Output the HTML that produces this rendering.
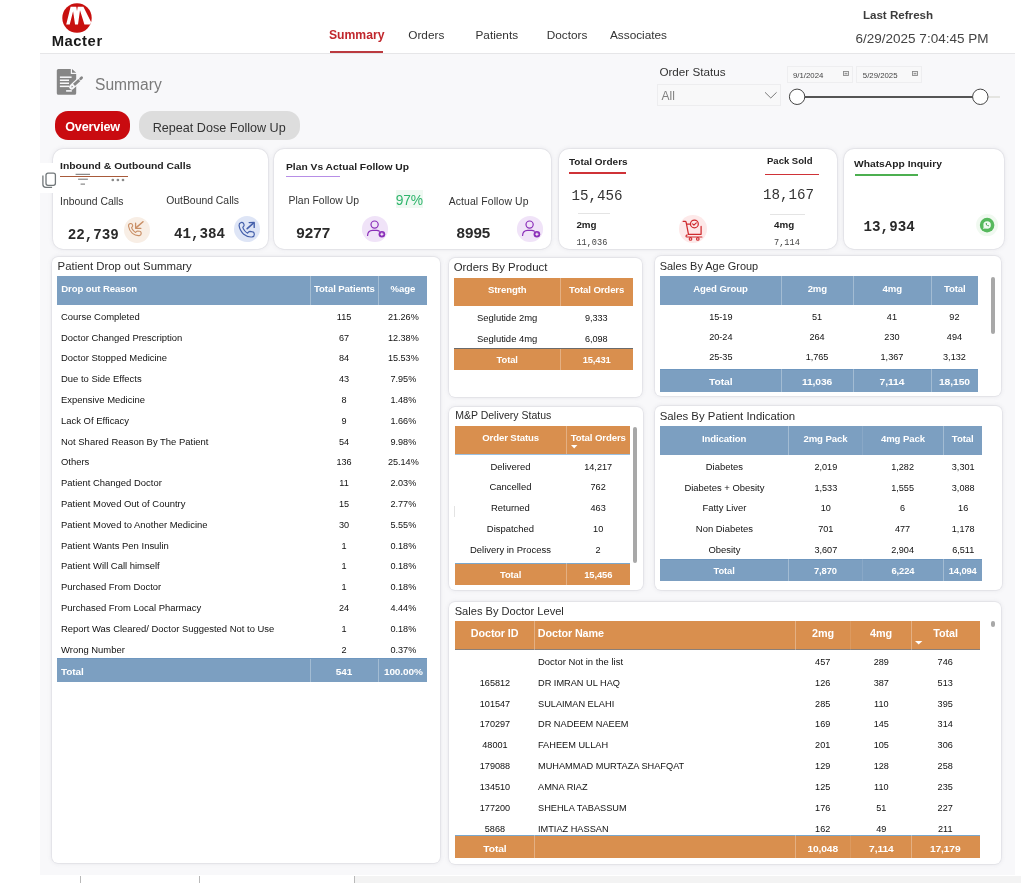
<!DOCTYPE html>
<html><head><meta charset="utf-8"><title>Summary</title>
<style>
html,body{margin:0;padding:0;}
html{width:1021px;height:883px;overflow:hidden;}
body{width:1021px;height:883px;position:relative;overflow:hidden;background:#fff;font-family:"Liberation Sans",sans-serif;}
.b{position:absolute;box-sizing:border-box;}
.t{position:absolute;white-space:nowrap;font-family:"Liberation Sans",sans-serif;}
.m{font-family:"Liberation Mono",monospace;}
.card{position:absolute;background:#fff;box-sizing:border-box;box-shadow:0 0 0 0.7px rgba(60,60,80,0.07),0 0 5px rgba(90,90,115,0.14);}
svg{position:absolute;overflow:visible;}
#L{position:absolute;left:0;top:0;width:1021px;height:883px;will-change:transform;overflow:hidden;}
</style></head><body><div id="L">

<div class="b" style="left:40.00px;top:53.00px;width:975.00px;height:821.50px;background:#f8f8fa;border-top:1px solid #e6e6e8;"></div>
<div class="b" style="left:354.50px;top:876.00px;width:667.00px;height:7.00px;background:#f3f3f3;"></div>
<div class="b" style="left:80.00px;top:876.00px;width:1.00px;height:7.00px;background:#b9b9b9;"></div>
<div class="b" style="left:199.00px;top:876.00px;width:1.00px;height:7.00px;background:#b9b9b9;"></div>
<div class="b" style="left:354.00px;top:876.00px;width:1.00px;height:7.00px;background:#b9b9b9;"></div>
<svg style="left:62px;top:2.5px" width="30" height="30" viewBox="0 0 30 30">
<defs><clipPath id="lc"><circle cx="15" cy="15" r="14.7"/></clipPath></defs>
<circle cx="15" cy="15" r="14.7" fill="#c8100f"/>
<path clip-path="url(#lc)" d="M4.2 21.6 L8.6 3.8 L14.3 3.8 L15.0 8.0 L15.7 3.8 L21.4 3.8 L29.8 20.4 L28 21.6 L22.4 21.6 L18 7.3 L16 21.6 L13.05 21.6 L11.1 8.3 L7.7 21.6 Z" fill="#fff"/>
</svg>
<div class="t" style="left:37.20px;top:33px;width:80.00px;font-size:14.8px;line-height:16px;color:#1a1a1a;text-align:center;font-weight:bold;letter-spacing:0.55px;">Macter</div>
<div class="t" style="left:306.70px;top:28px;width:100.00px;font-size:12.2px;line-height:14px;color:#c0272d;text-align:center;font-weight:bold;">Summary</div>
<div class="b" style="left:329.80px;top:50.90px;width:53.20px;height:1.90px;background:#bb3a3f;"></div>
<div class="t" style="left:376.30px;top:28px;width:100.00px;font-size:11.8px;line-height:14px;color:#333;text-align:center;">Orders</div>
<div class="t" style="left:446.80px;top:28px;width:100.00px;font-size:11.8px;line-height:14px;color:#333;text-align:center;">Patients</div>
<div class="t" style="left:517.00px;top:28px;width:100.00px;font-size:11.8px;line-height:14px;color:#333;text-align:center;">Doctors</div>
<div class="t" style="left:588.50px;top:28px;width:100.00px;font-size:11.8px;line-height:14px;color:#333;text-align:center;">Associates</div>
<div class="t" style="left:828.00px;top:8px;width:140.00px;font-size:11.6px;line-height:13px;color:#3c3c3c;text-align:center;font-weight:bold;">Last Refresh</div>
<div class="t" style="left:822.00px;top:31px;width:200.00px;font-size:13.5px;line-height:15px;color:#444;text-align:center;">6/29/2025 7:04:45 PM</div>
<svg style="left:56px;top:68px" width="28" height="28" viewBox="0 0 28 28">
<path d="M0.8 2.6 Q0.8 1.05 2.4 1.05 L14.8 1.05 L14.8 5.9 L20.2 5.9 L20.2 25.2 Q20.2 26.8 18.6 26.8 L2.4 26.8 Q0.8 26.8 0.8 25.2 Z" fill="#868686"/>
<path d="M16.0 1.1 L20.2 4.8 L16.0 4.8 Z" fill="#868686"/>
<rect x="3.9" y="8.45" width="11.7" height="1.5" fill="#f8f8fa"/>
<rect x="3.9" y="11.5" width="9.1" height="1.5" fill="#f8f8fa"/>
<rect x="3.9" y="14.5" width="9.1" height="1.5" fill="#f8f8fa"/>
<rect x="3.9" y="17.6" width="9.1" height="1.5" fill="#f8f8fa"/>
<rect x="10.1" y="22.1" width="5.7" height="1.6" fill="#f8f8fa"/>
<path d="M15.8 18.9 L25.5 10.0" stroke="#f8f8fa" stroke-width="5.2" stroke-linecap="round" fill="none"/>
<path d="M18.0 16.9 L23.3 12.1" stroke="#868686" stroke-width="2.8" fill="none"/>
<path d="M24.6 10.7 L25.6 9.8" stroke="#868686" stroke-width="2.8" stroke-linecap="round" fill="none"/>
<path d="M15.2 19.5 L15.9 17.6 L17.2 19.0 Z" fill="#868686"/>
</svg>
<div class="t" style="left:95.00px;top:76px;width:400.00px;font-size:15.6px;line-height:17px;color:#7a7a7a;text-align:left;">Summary</div>
<div class="t" style="left:659.40px;top:65px;width:400.00px;font-size:11.7px;line-height:13px;color:#333;text-align:left;">Order Status</div>
<div class="b" style="left:657.00px;top:84.00px;width:124.00px;height:21.50px;background:#f8f8f9;border:1px solid #ededef;"></div>
<div class="t" style="left:661.50px;top:89px;width:400.00px;font-size:12.0px;line-height:14px;color:#808080;text-align:left;">All</div>
<svg style="left:764px;top:91px" width="14" height="9" viewBox="0 0 14 9"><path d="M1 1.3 L6.8 7 L12.6 1.3" fill="none" stroke="#7a7a7a" stroke-width="1"/></svg>
<div class="b" style="left:786.70px;top:66.20px;width:66.00px;height:17.00px;background:#f8f8f9;border:1px solid #eeeef0;"></div>
<div class="b" style="left:856.40px;top:66.20px;width:65.50px;height:17.00px;background:#f8f8f9;border:1px solid #eeeef0;"></div>
<div class="t" style="left:793.00px;top:71px;width:400.00px;font-size:7.8px;line-height:9px;color:#444;text-align:left;">9/1/2024</div>
<div class="t" style="left:862.80px;top:71px;width:400.00px;font-size:7.8px;line-height:9px;color:#444;text-align:left;">5/29/2025</div>
<svg style="left:843px;top:71.3px" width="6" height="5" viewBox="0 0 6 5"><rect x="0.5" y="0.5" width="5" height="4" fill="#f0f0f0" stroke="#8c8c8c" stroke-width="0.9"/><rect x="1.6" y="1.9" width="2.8" height="1.4" fill="#9a9a9a"/></svg>
<svg style="left:912px;top:71.3px" width="6" height="5" viewBox="0 0 6 5"><rect x="0.5" y="0.5" width="5" height="4" fill="#f0f0f0" stroke="#8c8c8c" stroke-width="0.9"/><rect x="1.6" y="1.9" width="2.8" height="1.4" fill="#9a9a9a"/></svg>
<div class="b" style="left:797.00px;top:96.10px;width:183.00px;height:2.00px;background:#555;"></div>
<div class="b" style="left:988.00px;top:96.10px;width:12.00px;height:2.00px;background:#e5e5e1;"></div>
<svg style="left:788px;top:88.4px" width="18" height="18" viewBox="0 0 18 18"><circle cx="9.1" cy="8.8" r="7.7" fill="#fff" stroke="#444" stroke-width="1"/></svg>
<svg style="left:971.2px;top:88.4px" width="18" height="18" viewBox="0 0 18 18"><circle cx="9.3" cy="8.8" r="7.7" fill="#fff" stroke="#444" stroke-width="1"/></svg>
<div class="b" style="left:55.00px;top:111.20px;width:75.30px;height:28.80px;background:#c90b10;border-radius:13px;"></div>
<div class="t" style="left:52.60px;top:120px;width:80.00px;font-size:12.6px;line-height:14px;color:#fff;text-align:center;font-weight:bold;letter-spacing:-0.15px;">Overview</div>
<div class="b" style="left:138.80px;top:111.20px;width:160.80px;height:28.80px;background:#dddddd;border-radius:13px;"></div>
<div class="t" style="left:139.20px;top:121px;width:160.00px;font-size:12.6px;line-height:14px;color:#333;text-align:center;">Repeat Dose Follow Up</div>
<div class="card" style="left:52.80px;top:148.80px;width:215.20px;height:100.70px;border-radius:10px;"></div>
<div class="card" style="left:273.80px;top:148.80px;width:277.70px;height:100.70px;border-radius:10px;"></div>
<div class="card" style="left:559.40px;top:148.80px;width:277.20px;height:100.70px;border-radius:10px;"></div>
<div class="card" style="left:844.00px;top:149.30px;width:160.00px;height:99.70px;border-radius:10px;"></div>
<div class="t" style="left:60.00px;top:160px;width:400.00px;font-size:9.4px;line-height:11px;color:#222;text-align:left;font-weight:bold;transform:scaleX(1.106);transform-origin:left center;">Inbound &amp; Outbound Calls</div>
<div class="b" style="left:60.00px;top:175.50px;width:67.50px;height:1.10px;background:#a85a3a;"></div>
<div class="b" style="left:40.00px;top:163.30px;width:13.20px;height:29.40px;background:#ffffff;"></div>
<svg style="left:41.5px;top:171.5px" width="14" height="17" viewBox="0 0 14 17">
<rect x="4.0" y="1.1" width="9.4" height="12.2" rx="2" fill="#fff" stroke="#71777a" stroke-width="1.3"/>
<path d="M0.9 3.6 L0.9 12.5 Q0.9 15.3 3.8 15.3 L10.1 15.3" fill="none" stroke="#71777a" stroke-width="1.3"/>
</svg>
<svg style="left:75px;top:173px" width="16" height="13" viewBox="0 0 16 13">
<path d="M0.6 1.3 H15.0 M3.1 6.2 H12.9 M5.6 11.1 H10.0" stroke="#6f6f6f" stroke-width="1.0" fill="none"/></svg>
<svg style="left:111px;top:178px" width="14" height="4" viewBox="0 0 14 4">
<circle cx="1.8" cy="2" r="1.35" fill="#8a8a8a"/><circle cx="6.9" cy="2" r="1.35" fill="#8a8a8a"/><circle cx="12" cy="2" r="1.35" fill="#8a8a8a"/></svg>
<div class="t" style="left:60.00px;top:196px;width:400.00px;font-size:10.4px;line-height:11px;color:#333;text-align:left;">Inbound Calls</div>
<div class="t" style="left:166.20px;top:195px;width:400.00px;font-size:10.4px;line-height:11px;color:#333;text-align:left;">OutBound Calls</div>
<div class="t m" style="left:67.70px;top:227px;width:400.00px;font-size:14.2px;line-height:16px;color:#2a2a2a;text-align:left;font-weight:bold;">22,739</div>
<div class="t m" style="left:174.00px;top:226px;width:400.00px;font-size:14.2px;line-height:16px;color:#2a2a2a;text-align:left;font-weight:bold;">41,384</div>
<svg style="left:124.40px;top:216.60px" width="26" height="26" viewBox="0 0 26 26">
<circle cx="13" cy="13" r="13" fill="#f8eee5"/>
<path transform="translate(4.1,6.3)" d="M1.9 0.3 Q0.3 0.7 0.4 2.7 Q0.9 6.9 4.3 10.1 Q7.5 12.7 11.3 12.3 Q13.1 12.0 13.1 10.3 L12.9 9.1 Q12.7 8.1 11.7 8.0 L9.5 7.7 Q8.7 7.7 8.2 8.3 L7.5 9.1 Q5.9 8.3 4.9 6.9 Q3.9 5.7 3.5 4.3 L4.3 3.3 Q4.8 2.7 4.5 1.9 L3.9 0.7 Q3.3 -0.1 1.9 0.3 Z" fill="none" stroke="#c98f66" stroke-width="1.15" stroke-linejoin="round"/>
<path d="M19.0 4.7 L12.2 10.6" fill="none" stroke="#c98f66" stroke-width="1.5" stroke-linecap="round"/><path d="M11.6 6.2 L11.6 11.3 L16.9 11.3" fill="none" stroke="#c98f66" stroke-width="1.3" stroke-linecap="round" stroke-linejoin="round"/>
</svg>
<svg style="left:234.40px;top:216.00px" width="26" height="26" viewBox="0 0 26 26">
<circle cx="13" cy="13" r="13" fill="#dee5f6"/>
<path transform="translate(4.6,6.2) scale(1.2)" d="M1.9 0.3 Q0.3 0.7 0.4 2.7 Q0.9 6.9 4.3 10.1 Q7.5 12.7 11.3 12.3 Q13.1 12.0 13.1 10.3 L12.9 9.1 Q12.7 8.1 11.7 8.0 L9.5 7.7 Q8.7 7.7 8.2 8.3 L7.5 9.1 Q5.9 8.3 4.9 6.9 Q3.9 5.7 3.5 4.3 L4.3 3.3 Q4.8 2.7 4.5 1.9 L3.9 0.7 Q3.3 -0.1 1.9 0.3 Z" fill="none" stroke="#4560ab" stroke-width="1.0" stroke-linejoin="round"/>
<path d="M13.2 12.6 L19.4 7.2" fill="none" stroke="#4560ab" stroke-width="1.6" stroke-linecap="round"/><path d="M15.2 6.6 L20.2 6.5 L20.2 11.4" fill="none" stroke="#4560ab" stroke-width="1.4" stroke-linecap="round" stroke-linejoin="round"/>
</svg>
<div class="t" style="left:286.00px;top:161px;width:400.00px;font-size:9.4px;line-height:11px;color:#222;text-align:left;font-weight:bold;transform:scaleX(1.096);transform-origin:left center;">Plan Vs Actual Follow Up</div>
<div class="b" style="left:286.00px;top:175.50px;width:54.00px;height:1.90px;background:#b78ee6;"></div>
<div class="t" style="left:288.50px;top:195px;width:400.00px;font-size:10.4px;line-height:11px;color:#333;text-align:left;letter-spacing:0.05px;">Plan Follow Up</div>
<div class="b" style="left:396.00px;top:190.20px;width:27.30px;height:17.50px;background:#eff9f2;"></div>
<div class="t" style="left:389.30px;top:193px;width:40.00px;font-size:13.8px;line-height:15px;color:#2fb56c;text-align:center;letter-spacing:-0.2px;">97%</div>
<div class="t" style="left:448.70px;top:196px;width:400.00px;font-size:10.4px;line-height:11px;color:#333;text-align:left;letter-spacing:0.12px;">Actual Follow Up</div>
<div class="t" style="left:296.30px;top:224px;width:400.00px;font-size:15.2px;line-height:17px;color:#2a2a2a;text-align:left;font-weight:bold;">9277</div>
<div class="t" style="left:456.50px;top:224px;width:400.00px;font-size:15.2px;line-height:17px;color:#2a2a2a;text-align:left;font-weight:bold;">8995</div>
<svg style="left:362.20px;top:216.10px" width="26" height="26" viewBox="0 0 26 26">
<circle cx="13" cy="13" r="13.1" fill="#f0e3f8"/>
<circle cx="12.6" cy="8.6" r="3.6" fill="none" stroke="#8b2fb9" stroke-width="1.2"/>
<path d="M5.6 19.4 Q5.8 14.6 10.6 14.4 L14.6 14.4 Q16.4 14.4 17.4 15.2" fill="none" stroke="#8b2fb9" stroke-width="1.2" stroke-linecap="round"/>
<circle cx="19.9" cy="18.2" r="3.3" fill="#8b2fb9"/>
<path d="M19.9 16.6 V19.8 M18.3 18.2 H21.5" stroke="#fff" stroke-width="1"/>
</svg>
<svg style="left:517.40px;top:216.10px" width="26" height="26" viewBox="0 0 26 26">
<circle cx="13" cy="13" r="13.1" fill="#f0e3f8"/>
<circle cx="12.6" cy="8.6" r="3.6" fill="none" stroke="#8b2fb9" stroke-width="1.2"/>
<path d="M5.6 19.4 Q5.8 14.6 10.6 14.4 L14.6 14.4 Q16.4 14.4 17.4 15.2" fill="none" stroke="#8b2fb9" stroke-width="1.2" stroke-linecap="round"/>
<circle cx="19.9" cy="18.2" r="3.3" fill="#8b2fb9"/>
<path d="M19.9 16.6 V19.8 M18.3 18.2 H21.5" stroke="#fff" stroke-width="1"/>
</svg>
<div class="t" style="left:569.00px;top:156px;width:400.00px;font-size:9.4px;line-height:11px;color:#222;text-align:left;font-weight:bold;transform:scaleX(1.064);transform-origin:left center;">Total Orders</div>
<div class="b" style="left:569.00px;top:172.40px;width:56.50px;height:1.40px;background:#cf3237;"></div>
<div class="t" style="left:767.20px;top:155px;width:400.00px;font-size:9.4px;line-height:11px;color:#222;text-align:left;font-weight:bold;transform:scaleX(1.015);transform-origin:left center;">Pack Sold</div>
<div class="b" style="left:765.00px;top:173.80px;width:54.00px;height:1.40px;background:#cf3237;"></div>
<div class="t m" style="left:571.50px;top:188px;width:400.00px;font-size:14.2px;line-height:16px;color:#333;text-align:left;">15,456</div>
<div class="t m" style="left:763.00px;top:187px;width:400.00px;font-size:14.2px;line-height:16px;color:#333;text-align:left;">18,167</div>
<div class="b" style="left:578.00px;top:212.80px;width:32.00px;height:1.00px;background:#e4e4e4;"></div>
<div class="b" style="left:770.40px;top:214.00px;width:34.50px;height:1.00px;background:#e4e4e4;"></div>
<div class="t" style="left:576.40px;top:219px;width:400.00px;font-size:9.8px;line-height:11px;color:#222;text-align:left;font-weight:bold;">2mg</div>
<div class="t" style="left:774.00px;top:219px;width:400.00px;font-size:9.8px;line-height:11px;color:#222;text-align:left;font-weight:bold;">4mg</div>
<div class="t m" style="left:576.40px;top:238px;width:400.00px;font-size:8.6px;line-height:10px;color:#444;text-align:left;">11,036</div>
<div class="t m" style="left:774.00px;top:238px;width:400.00px;font-size:8.6px;line-height:10px;color:#444;text-align:left;">7,114</div>
<svg style="left:679px;top:215.3px" width="28" height="28" viewBox="0 0 28 28">
<circle cx="14" cy="14" r="14" fill="#fde9e9"/>
<path d="M4.2 6.4 L6.2 6.4 Q6.9 6.4 7.1 7.2 L9.5 19.3 L22.1 19.3 L22.1 11.4" fill="none" stroke="#cf2a2e" stroke-width="1.25" stroke-linecap="round" stroke-linejoin="round"/>
<path d="M7.8 9.2 L11.4 9.2" fill="none" stroke="#cf2a2e" stroke-width="1.2" stroke-linecap="round"/>
<path d="M8.2 19.9 Q7.0 20.2 7.0 21.2 Q7.0 22.0 8.0 22.0 L22.9 22.0" fill="none" stroke="#cf2a2e" stroke-width="1.2" stroke-linecap="round" stroke-linejoin="round"/>
<circle cx="15.4" cy="8.9" r="3.9" fill="#fde9e9" stroke="#cf2a2e" stroke-width="1.25"/>
<path d="M13.6 8.9 L14.9 10.2 L17.3 7.8" fill="none" stroke="#cf2a2e" stroke-width="1.2" stroke-linecap="round" stroke-linejoin="round"/>
<circle cx="11.5" cy="23.9" r="1.3" fill="none" stroke="#cf2a2e" stroke-width="1.1"/>
<circle cx="18.8" cy="23.9" r="1.3" fill="none" stroke="#cf2a2e" stroke-width="1.1"/>
</svg>
<div class="t" style="left:853.80px;top:158px;width:400.00px;font-size:9.4px;line-height:11px;color:#222;text-align:left;font-weight:bold;transform:scaleX(1.096);transform-origin:left center;">WhatsApp Inquiry</div>
<div class="b" style="left:855.00px;top:173.70px;width:63.00px;height:2.00px;background:#4caf50;"></div>
<div class="t m" style="left:863.60px;top:219px;width:400.00px;font-size:14.2px;line-height:16px;color:#2a2a2a;text-align:left;font-weight:bold;">13,934</div>
<svg style="left:975.6px;top:214px" width="22" height="22" viewBox="0 0 22 22">
<circle cx="11.1" cy="11.1" r="11" fill="#f0f9f0"/>
<circle cx="11.1" cy="11.1" r="7.3" fill="#57b95d"/>
<circle cx="11.1" cy="10.9" r="3.75" fill="#f1faf1"/>
<path d="M7.0 15.0 L7.9 12.4 L9.8 14.3 Z" fill="#f1faf1"/>
<path d="M9.7 9.0 Q9.6 10.5 10.8 11.6 Q11.8 12.5 13.0 12.3 L13.0 11.6 L12.1 11.2 L11.7 11.6 Q11.0 11.2 10.7 10.6 L11.0 10.1 L10.5 9.0 Z" fill="#3e9b48"/>
</svg>
<div class="card" style="left:52.00px;top:256.50px;width:388.00px;height:606.50px;border-radius:6px;"></div>
<div class="t" style="left:57.60px;top:260px;width:400.00px;font-size:11.4px;line-height:12px;color:#2b2b2b;text-align:left;">Patient Drop out Summary</div>
<div class="b" style="left:57.20px;top:275.90px;width:370.00px;height:28.80px;background:#7c9fc1;"></div>
<div class="b" style="left:309.90px;top:275.90px;width:1.00px;height:28.80px;background:rgba(255,255,255,0.3);"></div>
<div class="b" style="left:378.00px;top:275.90px;width:1.00px;height:28.80px;background:rgba(255,255,255,0.3);"></div>
<div class="t" style="left:61.20px;top:283px;width:400.00px;font-size:9.6px;line-height:11px;color:#fff;text-align:left;font-weight:bold;letter-spacing:-0.1px;">Drop out Reason</div>
<div class="t" style="left:300.40px;top:283px;width:88.10px;font-size:9.6px;line-height:11px;color:#fff;text-align:center;font-weight:bold;letter-spacing:-0.1px;">Total Patients</div>
<div class="t" style="left:368.50px;top:283px;width:68.70px;font-size:9.6px;line-height:11px;color:#fff;text-align:center;font-weight:bold;letter-spacing:-0.1px;">%age</div>
<div class="t" style="left:61.20px;top:311px;width:400.00px;font-size:9.7px;line-height:11px;color:#111;text-align:left;transform:scaleX(0.975);transform-origin:left center;">Course Completed</div>
<div class="t" style="left:300.40px;top:311px;width:88.10px;font-size:9.7px;line-height:11px;color:#111;text-align:center;transform:scaleX(0.94);transform-origin:center center;">115</div>
<div class="t" style="left:368.50px;top:311px;width:68.70px;font-size:9.7px;line-height:11px;color:#111;text-align:center;transform:scaleX(0.94);transform-origin:center center;">21.26%</div>
<div class="t" style="left:61.20px;top:332px;width:400.00px;font-size:9.7px;line-height:11px;color:#111;text-align:left;transform:scaleX(0.975);transform-origin:left center;">Doctor Changed Prescription</div>
<div class="t" style="left:300.40px;top:332px;width:88.10px;font-size:9.7px;line-height:11px;color:#111;text-align:center;transform:scaleX(0.94);transform-origin:center center;">67</div>
<div class="t" style="left:368.50px;top:332px;width:68.70px;font-size:9.7px;line-height:11px;color:#111;text-align:center;transform:scaleX(0.94);transform-origin:center center;">12.38%</div>
<div class="t" style="left:61.20px;top:352px;width:400.00px;font-size:9.7px;line-height:11px;color:#111;text-align:left;transform:scaleX(0.975);transform-origin:left center;">Doctor Stopped Medicine</div>
<div class="t" style="left:300.40px;top:352px;width:88.10px;font-size:9.7px;line-height:11px;color:#111;text-align:center;transform:scaleX(0.94);transform-origin:center center;">84</div>
<div class="t" style="left:368.50px;top:352px;width:68.70px;font-size:9.7px;line-height:11px;color:#111;text-align:center;transform:scaleX(0.94);transform-origin:center center;">15.53%</div>
<div class="t" style="left:61.20px;top:373px;width:400.00px;font-size:9.7px;line-height:11px;color:#111;text-align:left;transform:scaleX(0.975);transform-origin:left center;">Due to Side Effects</div>
<div class="t" style="left:300.40px;top:373px;width:88.10px;font-size:9.7px;line-height:11px;color:#111;text-align:center;transform:scaleX(0.94);transform-origin:center center;">43</div>
<div class="t" style="left:368.50px;top:373px;width:68.70px;font-size:9.7px;line-height:11px;color:#111;text-align:center;transform:scaleX(0.94);transform-origin:center center;">7.95%</div>
<div class="t" style="left:61.20px;top:394px;width:400.00px;font-size:9.7px;line-height:11px;color:#111;text-align:left;transform:scaleX(0.975);transform-origin:left center;">Expensive Medicine</div>
<div class="t" style="left:300.40px;top:394px;width:88.10px;font-size:9.7px;line-height:11px;color:#111;text-align:center;transform:scaleX(0.94);transform-origin:center center;">8</div>
<div class="t" style="left:368.50px;top:394px;width:68.70px;font-size:9.7px;line-height:11px;color:#111;text-align:center;transform:scaleX(0.94);transform-origin:center center;">1.48%</div>
<div class="t" style="left:61.20px;top:415px;width:400.00px;font-size:9.7px;line-height:11px;color:#111;text-align:left;transform:scaleX(0.975);transform-origin:left center;">Lack Of Efficacy</div>
<div class="t" style="left:300.40px;top:415px;width:88.10px;font-size:9.7px;line-height:11px;color:#111;text-align:center;transform:scaleX(0.94);transform-origin:center center;">9</div>
<div class="t" style="left:368.50px;top:415px;width:68.70px;font-size:9.7px;line-height:11px;color:#111;text-align:center;transform:scaleX(0.94);transform-origin:center center;">1.66%</div>
<div class="t" style="left:61.20px;top:436px;width:400.00px;font-size:9.7px;line-height:11px;color:#111;text-align:left;transform:scaleX(0.975);transform-origin:left center;">Not Shared Reason By The Patient</div>
<div class="t" style="left:300.40px;top:436px;width:88.10px;font-size:9.7px;line-height:11px;color:#111;text-align:center;transform:scaleX(0.94);transform-origin:center center;">54</div>
<div class="t" style="left:368.50px;top:436px;width:68.70px;font-size:9.7px;line-height:11px;color:#111;text-align:center;transform:scaleX(0.94);transform-origin:center center;">9.98%</div>
<div class="t" style="left:61.20px;top:456px;width:400.00px;font-size:9.7px;line-height:11px;color:#111;text-align:left;transform:scaleX(0.975);transform-origin:left center;">Others</div>
<div class="t" style="left:300.40px;top:456px;width:88.10px;font-size:9.7px;line-height:11px;color:#111;text-align:center;transform:scaleX(0.94);transform-origin:center center;">136</div>
<div class="t" style="left:368.50px;top:456px;width:68.70px;font-size:9.7px;line-height:11px;color:#111;text-align:center;transform:scaleX(0.94);transform-origin:center center;">25.14%</div>
<div class="t" style="left:61.20px;top:477px;width:400.00px;font-size:9.7px;line-height:11px;color:#111;text-align:left;transform:scaleX(0.975);transform-origin:left center;">Patient Changed Doctor</div>
<div class="t" style="left:300.40px;top:477px;width:88.10px;font-size:9.7px;line-height:11px;color:#111;text-align:center;transform:scaleX(0.94);transform-origin:center center;">11</div>
<div class="t" style="left:368.50px;top:477px;width:68.70px;font-size:9.7px;line-height:11px;color:#111;text-align:center;transform:scaleX(0.94);transform-origin:center center;">2.03%</div>
<div class="t" style="left:61.20px;top:498px;width:400.00px;font-size:9.7px;line-height:11px;color:#111;text-align:left;transform:scaleX(0.975);transform-origin:left center;">Patient Moved Out of Country</div>
<div class="t" style="left:300.40px;top:498px;width:88.10px;font-size:9.7px;line-height:11px;color:#111;text-align:center;transform:scaleX(0.94);transform-origin:center center;">15</div>
<div class="t" style="left:368.50px;top:498px;width:68.70px;font-size:9.7px;line-height:11px;color:#111;text-align:center;transform:scaleX(0.94);transform-origin:center center;">2.77%</div>
<div class="t" style="left:61.20px;top:519px;width:400.00px;font-size:9.7px;line-height:11px;color:#111;text-align:left;transform:scaleX(0.975);transform-origin:left center;">Patient Moved to Another Medicine</div>
<div class="t" style="left:300.40px;top:519px;width:88.10px;font-size:9.7px;line-height:11px;color:#111;text-align:center;transform:scaleX(0.94);transform-origin:center center;">30</div>
<div class="t" style="left:368.50px;top:519px;width:68.70px;font-size:9.7px;line-height:11px;color:#111;text-align:center;transform:scaleX(0.94);transform-origin:center center;">5.55%</div>
<div class="t" style="left:61.20px;top:540px;width:400.00px;font-size:9.7px;line-height:11px;color:#111;text-align:left;transform:scaleX(0.975);transform-origin:left center;">Patient Wants Pen Insulin</div>
<div class="t" style="left:300.40px;top:540px;width:88.10px;font-size:9.7px;line-height:11px;color:#111;text-align:center;transform:scaleX(0.94);transform-origin:center center;">1</div>
<div class="t" style="left:368.50px;top:540px;width:68.70px;font-size:9.7px;line-height:11px;color:#111;text-align:center;transform:scaleX(0.94);transform-origin:center center;">0.18%</div>
<div class="t" style="left:61.20px;top:560px;width:400.00px;font-size:9.7px;line-height:11px;color:#111;text-align:left;transform:scaleX(0.975);transform-origin:left center;">Patient Will Call himself</div>
<div class="t" style="left:300.40px;top:560px;width:88.10px;font-size:9.7px;line-height:11px;color:#111;text-align:center;transform:scaleX(0.94);transform-origin:center center;">1</div>
<div class="t" style="left:368.50px;top:560px;width:68.70px;font-size:9.7px;line-height:11px;color:#111;text-align:center;transform:scaleX(0.94);transform-origin:center center;">0.18%</div>
<div class="t" style="left:61.20px;top:581px;width:400.00px;font-size:9.7px;line-height:11px;color:#111;text-align:left;transform:scaleX(0.975);transform-origin:left center;">Purchased From Doctor</div>
<div class="t" style="left:300.40px;top:581px;width:88.10px;font-size:9.7px;line-height:11px;color:#111;text-align:center;transform:scaleX(0.94);transform-origin:center center;">1</div>
<div class="t" style="left:368.50px;top:581px;width:68.70px;font-size:9.7px;line-height:11px;color:#111;text-align:center;transform:scaleX(0.94);transform-origin:center center;">0.18%</div>
<div class="t" style="left:61.20px;top:602px;width:400.00px;font-size:9.7px;line-height:11px;color:#111;text-align:left;transform:scaleX(0.975);transform-origin:left center;">Purchased From Local Pharmacy</div>
<div class="t" style="left:300.40px;top:602px;width:88.10px;font-size:9.7px;line-height:11px;color:#111;text-align:center;transform:scaleX(0.94);transform-origin:center center;">24</div>
<div class="t" style="left:368.50px;top:602px;width:68.70px;font-size:9.7px;line-height:11px;color:#111;text-align:center;transform:scaleX(0.94);transform-origin:center center;">4.44%</div>
<div class="t" style="left:61.20px;top:623px;width:400.00px;font-size:9.7px;line-height:11px;color:#111;text-align:left;transform:scaleX(0.975);transform-origin:left center;">Report Was Cleared/ Doctor Suggested Not to Use</div>
<div class="t" style="left:300.40px;top:623px;width:88.10px;font-size:9.7px;line-height:11px;color:#111;text-align:center;transform:scaleX(0.94);transform-origin:center center;">1</div>
<div class="t" style="left:368.50px;top:623px;width:68.70px;font-size:9.7px;line-height:11px;color:#111;text-align:center;transform:scaleX(0.94);transform-origin:center center;">0.18%</div>
<div class="t" style="left:61.20px;top:644px;width:400.00px;font-size:9.7px;line-height:11px;color:#111;text-align:left;transform:scaleX(0.975);transform-origin:left center;">Wrong Number</div>
<div class="t" style="left:300.40px;top:644px;width:88.10px;font-size:9.7px;line-height:11px;color:#111;text-align:center;transform:scaleX(0.94);transform-origin:center center;">2</div>
<div class="t" style="left:368.50px;top:644px;width:68.70px;font-size:9.7px;line-height:11px;color:#111;text-align:center;transform:scaleX(0.94);transform-origin:center center;">0.37%</div>
<div class="b" style="left:57.20px;top:658.80px;width:370.00px;height:23.00px;background:#7c9fc1;"></div>
<div class="b" style="left:57.20px;top:658.30px;width:370.00px;height:1.20px;background:#6f97bf;"></div>
<div class="b" style="left:309.90px;top:658.80px;width:1.00px;height:23.00px;background:rgba(255,255,255,0.3);"></div>
<div class="b" style="left:378.00px;top:658.80px;width:1.00px;height:23.00px;background:rgba(255,255,255,0.3);"></div>
<div class="t" style="left:61.20px;top:666px;width:400.00px;font-size:9.6px;line-height:11px;color:#fff;text-align:left;font-weight:bold;letter-spacing:-0.1px;transform:scaleX(1.045);transform-origin:left center;">Total</div>
<div class="t" style="left:300.40px;top:666px;width:88.10px;font-size:9.6px;line-height:11px;color:#fff;text-align:center;font-weight:bold;letter-spacing:-0.1px;transform:scaleX(1.045);transform-origin:center center;">541</div>
<div class="t" style="left:368.50px;top:666px;width:68.70px;font-size:9.6px;line-height:11px;color:#fff;text-align:center;font-weight:bold;letter-spacing:-0.1px;transform:scaleX(1.045);transform-origin:center center;">100.00%</div>
<div class="card" style="left:448.50px;top:258.00px;width:193.50px;height:139.00px;border-radius:6px;"></div>
<div class="t" style="left:453.70px;top:261px;width:400.00px;font-size:11.4px;line-height:12px;color:#2b2b2b;text-align:left;">Orders By Product</div>
<div class="b" style="left:454.00px;top:277.50px;width:179.00px;height:28.00px;background:#d98f4e;"></div>
<div class="b" style="left:559.90px;top:277.50px;width:1.00px;height:28.00px;background:rgba(255,255,255,0.3);"></div>
<div class="t" style="left:444.00px;top:284px;width:126.40px;font-size:9.6px;line-height:11px;color:#fff;text-align:center;font-weight:bold;letter-spacing:-0.1px;">Strength</div>
<div class="t" style="left:550.40px;top:284px;width:92.60px;font-size:9.6px;line-height:11px;color:#fff;text-align:center;font-weight:bold;letter-spacing:-0.1px;">Total Orders</div>
<div class="t" style="left:444.00px;top:312px;width:126.40px;font-size:9.7px;line-height:11px;color:#111;text-align:center;transform:scaleX(0.975);transform-origin:center center;">Seglutide 2mg</div>
<div class="t" style="left:550.40px;top:312px;width:92.60px;font-size:9.7px;line-height:11px;color:#111;text-align:center;transform:scaleX(0.94);transform-origin:center center;">9,333</div>
<div class="t" style="left:444.00px;top:333px;width:126.40px;font-size:9.7px;line-height:11px;color:#111;text-align:center;transform:scaleX(0.975);transform-origin:center center;">Seglutide 4mg</div>
<div class="t" style="left:550.40px;top:333px;width:92.60px;font-size:9.7px;line-height:11px;color:#111;text-align:center;transform:scaleX(0.94);transform-origin:center center;">6,098</div>
<div class="b" style="left:454.00px;top:348.60px;width:179.00px;height:21.00px;background:#d98f4e;"></div>
<div class="b" style="left:454.00px;top:348.10px;width:179.00px;height:1.20px;background:#6b6b6b;"></div>
<div class="b" style="left:559.90px;top:348.60px;width:1.00px;height:21.00px;background:rgba(255,255,255,0.3);"></div>
<div class="t" style="left:444.00px;top:354px;width:126.40px;font-size:9.4px;line-height:11px;color:#fff;text-align:center;font-weight:bold;letter-spacing:-0.1px;">Total</div>
<div class="t" style="left:550.40px;top:354px;width:92.60px;font-size:9.4px;line-height:11px;color:#fff;text-align:center;font-weight:bold;letter-spacing:-0.1px;">15,431</div>
<div class="card" style="left:449.40px;top:406.60px;width:194.00px;height:183.00px;border-radius:6px;"></div>
<div class="t" style="left:455.20px;top:409px;width:400.00px;font-size:10.5px;line-height:12px;color:#2b2b2b;text-align:left;">M&amp;P Delivery Status</div>
<div class="b" style="left:455.20px;top:425.80px;width:175.20px;height:28.50px;background:#d98f4e;"></div>
<div class="b" style="left:455.20px;top:453.50px;width:175.20px;height:1.00px;background:#9cc0e0;"></div>
<div class="b" style="left:565.60px;top:425.80px;width:1.00px;height:28.50px;background:rgba(255,255,255,0.3);"></div>
<div class="t" style="left:445.20px;top:432px;width:130.90px;font-size:9.6px;line-height:11px;color:#fff;text-align:center;font-weight:bold;letter-spacing:-0.1px;">Order Status</div>
<div class="t" style="left:556.10px;top:432px;width:84.30px;font-size:9.6px;line-height:11px;color:#fff;text-align:center;font-weight:bold;letter-spacing:-0.1px;">Total Orders</div>
<div class="t" style="left:445.20px;top:461px;width:130.90px;font-size:9.7px;line-height:11px;color:#111;text-align:center;transform:scaleX(0.975);transform-origin:center center;">Delivered</div>
<div class="t" style="left:556.10px;top:461px;width:84.30px;font-size:9.7px;line-height:11px;color:#111;text-align:center;transform:scaleX(0.94);transform-origin:center center;">14,217</div>
<div class="t" style="left:445.20px;top:481px;width:130.90px;font-size:9.7px;line-height:11px;color:#111;text-align:center;transform:scaleX(0.975);transform-origin:center center;">Cancelled</div>
<div class="t" style="left:556.10px;top:481px;width:84.30px;font-size:9.7px;line-height:11px;color:#111;text-align:center;transform:scaleX(0.94);transform-origin:center center;">762</div>
<div class="t" style="left:445.20px;top:502px;width:130.90px;font-size:9.7px;line-height:11px;color:#111;text-align:center;transform:scaleX(0.975);transform-origin:center center;">Returned</div>
<div class="t" style="left:556.10px;top:502px;width:84.30px;font-size:9.7px;line-height:11px;color:#111;text-align:center;transform:scaleX(0.94);transform-origin:center center;">463</div>
<div class="t" style="left:445.20px;top:523px;width:130.90px;font-size:9.7px;line-height:11px;color:#111;text-align:center;transform:scaleX(0.975);transform-origin:center center;">Dispatched</div>
<div class="t" style="left:556.10px;top:523px;width:84.30px;font-size:9.7px;line-height:11px;color:#111;text-align:center;transform:scaleX(0.94);transform-origin:center center;">10</div>
<div class="t" style="left:445.20px;top:544px;width:130.90px;font-size:9.7px;line-height:11px;color:#111;text-align:center;transform:scaleX(0.975);transform-origin:center center;">Delivery in Process</div>
<div class="t" style="left:556.10px;top:544px;width:84.30px;font-size:9.7px;line-height:11px;color:#111;text-align:center;transform:scaleX(0.94);transform-origin:center center;">2</div>
<div class="b" style="left:455.20px;top:563.40px;width:175.20px;height:21.20px;background:#d98f4e;"></div>
<div class="b" style="left:455.20px;top:562.90px;width:175.20px;height:1.20px;background:#7aa7cc;"></div>
<div class="b" style="left:565.60px;top:563.40px;width:1.00px;height:21.20px;background:rgba(255,255,255,0.3);"></div>
<div class="t" style="left:445.20px;top:569px;width:130.90px;font-size:9.4px;line-height:11px;color:#fff;text-align:center;font-weight:bold;letter-spacing:-0.1px;">Total</div>
<div class="t" style="left:556.10px;top:569px;width:84.30px;font-size:9.4px;line-height:11px;color:#fff;text-align:center;font-weight:bold;letter-spacing:-0.1px;">15,456</div>
<div class="b" style="left:633.30px;top:426.60px;width:4.00px;height:136.30px;background:#a8a8a8;border-radius:2px;"></div>
<svg style="left:570.8px;top:444.6px" width="6.4" height="4" viewBox="0 0 6.4 4"><path d="M0 0 H6.4 L3.2 3.4 Z" fill="#fff"/></svg>
<div class="b" style="left:454.40px;top:505.80px;width:1.00px;height:11.70px;background:#e3e3e3;"></div>
<div class="card" style="left:655.00px;top:256.30px;width:346.00px;height:140.00px;border-radius:6px;"></div>
<div class="t" style="left:659.70px;top:260px;width:400.00px;font-size:10.95px;line-height:12px;color:#2b2b2b;text-align:left;">Sales By Age Group</div>
<div class="b" style="left:659.70px;top:276.00px;width:318.50px;height:28.60px;background:#7c9fc1;"></div>
<div class="b" style="left:780.80px;top:276.00px;width:1.00px;height:28.60px;background:rgba(255,255,255,0.3);"></div>
<div class="b" style="left:852.90px;top:276.00px;width:1.00px;height:28.60px;background:rgba(255,255,255,0.3);"></div>
<div class="b" style="left:930.80px;top:276.00px;width:1.00px;height:28.60px;background:rgba(255,255,255,0.3);"></div>
<div class="t" style="left:649.70px;top:283px;width:141.60px;font-size:9.6px;line-height:11px;color:#fff;text-align:center;font-weight:bold;letter-spacing:-0.1px;">Aged Group</div>
<div class="t" style="left:771.30px;top:283px;width:92.10px;font-size:9.6px;line-height:11px;color:#fff;text-align:center;font-weight:bold;letter-spacing:-0.1px;">2mg</div>
<div class="t" style="left:843.40px;top:283px;width:97.90px;font-size:9.6px;line-height:11px;color:#fff;text-align:center;font-weight:bold;letter-spacing:-0.1px;">4mg</div>
<div class="t" style="left:921.30px;top:283px;width:66.90px;font-size:9.6px;line-height:11px;color:#fff;text-align:center;font-weight:bold;letter-spacing:-0.1px;">Total</div>
<div class="t" style="left:649.70px;top:311px;width:141.60px;font-size:9.7px;line-height:11px;color:#111;text-align:center;transform:scaleX(0.94);transform-origin:center center;">15-19</div>
<div class="t" style="left:771.30px;top:311px;width:92.10px;font-size:9.7px;line-height:11px;color:#111;text-align:center;transform:scaleX(0.94);transform-origin:center center;">51</div>
<div class="t" style="left:843.40px;top:311px;width:97.90px;font-size:9.7px;line-height:11px;color:#111;text-align:center;transform:scaleX(0.94);transform-origin:center center;">41</div>
<div class="t" style="left:921.30px;top:311px;width:66.90px;font-size:9.7px;line-height:11px;color:#111;text-align:center;transform:scaleX(0.94);transform-origin:center center;">92</div>
<div class="t" style="left:649.70px;top:331px;width:141.60px;font-size:9.7px;line-height:11px;color:#111;text-align:center;transform:scaleX(0.94);transform-origin:center center;">20-24</div>
<div class="t" style="left:771.30px;top:331px;width:92.10px;font-size:9.7px;line-height:11px;color:#111;text-align:center;transform:scaleX(0.94);transform-origin:center center;">264</div>
<div class="t" style="left:843.40px;top:331px;width:97.90px;font-size:9.7px;line-height:11px;color:#111;text-align:center;transform:scaleX(0.94);transform-origin:center center;">230</div>
<div class="t" style="left:921.30px;top:331px;width:66.90px;font-size:9.7px;line-height:11px;color:#111;text-align:center;transform:scaleX(0.94);transform-origin:center center;">494</div>
<div class="t" style="left:649.70px;top:351px;width:141.60px;font-size:9.7px;line-height:11px;color:#111;text-align:center;transform:scaleX(0.94);transform-origin:center center;">25-35</div>
<div class="t" style="left:771.30px;top:351px;width:92.10px;font-size:9.7px;line-height:11px;color:#111;text-align:center;transform:scaleX(0.94);transform-origin:center center;">1,765</div>
<div class="t" style="left:843.40px;top:351px;width:97.90px;font-size:9.7px;line-height:11px;color:#111;text-align:center;transform:scaleX(0.94);transform-origin:center center;">1,367</div>
<div class="t" style="left:921.30px;top:351px;width:66.90px;font-size:9.7px;line-height:11px;color:#111;text-align:center;transform:scaleX(0.94);transform-origin:center center;">3,132</div>
<div class="b" style="left:659.70px;top:369.20px;width:318.50px;height:22.70px;background:#7c9fc1;"></div>
<div class="b" style="left:659.70px;top:368.70px;width:318.50px;height:1.20px;background:#6f97bf;"></div>
<div class="b" style="left:780.80px;top:369.20px;width:1.00px;height:22.70px;background:rgba(255,255,255,0.3);"></div>
<div class="b" style="left:852.90px;top:369.20px;width:1.00px;height:22.70px;background:rgba(255,255,255,0.3);"></div>
<div class="b" style="left:930.80px;top:369.20px;width:1.00px;height:22.70px;background:rgba(255,255,255,0.3);"></div>
<div class="t" style="left:649.70px;top:376px;width:141.60px;font-size:9.6px;line-height:11px;color:#fff;text-align:center;font-weight:bold;letter-spacing:-0.1px;transform:scaleX(1.075);transform-origin:center center;">Total</div>
<div class="t" style="left:771.30px;top:376px;width:92.10px;font-size:9.6px;line-height:11px;color:#fff;text-align:center;font-weight:bold;letter-spacing:-0.1px;transform:scaleX(1.075);transform-origin:center center;">11,036</div>
<div class="t" style="left:843.40px;top:376px;width:97.90px;font-size:9.6px;line-height:11px;color:#fff;text-align:center;font-weight:bold;letter-spacing:-0.1px;transform:scaleX(1.075);transform-origin:center center;">7,114</div>
<div class="t" style="left:921.30px;top:376px;width:66.90px;font-size:9.6px;line-height:11px;color:#fff;text-align:center;font-weight:bold;letter-spacing:-0.1px;transform:scaleX(1.075);transform-origin:center center;">18,150</div>
<div class="b" style="left:990.50px;top:276.80px;width:4.40px;height:57.60px;background:#a8a8a8;border-radius:2.2px;"></div>
<div class="card" style="left:655.00px;top:406.00px;width:346.50px;height:184.20px;border-radius:6px;"></div>
<div class="t" style="left:659.70px;top:410px;width:400.00px;font-size:11.4px;line-height:12px;color:#2b2b2b;text-align:left;">Sales By Patient Indication</div>
<div class="b" style="left:659.70px;top:425.90px;width:322.20px;height:28.80px;background:#7c9fc1;"></div>
<div class="b" style="left:788.10px;top:425.90px;width:1.00px;height:28.80px;background:rgba(255,255,255,0.3);"></div>
<div class="b" style="left:861.80px;top:425.90px;width:1.00px;height:28.80px;background:rgba(255,255,255,0.1);"></div>
<div class="b" style="left:943.00px;top:425.90px;width:1.00px;height:28.80px;background:rgba(255,255,255,0.3);"></div>
<div class="t" style="left:649.70px;top:433px;width:148.90px;font-size:9.6px;line-height:11px;color:#fff;text-align:center;font-weight:bold;letter-spacing:-0.1px;">Indication</div>
<div class="t" style="left:778.60px;top:433px;width:93.70px;font-size:9.6px;line-height:11px;color:#fff;text-align:center;font-weight:bold;letter-spacing:-0.1px;">2mg Pack</div>
<div class="t" style="left:852.30px;top:433px;width:101.20px;font-size:9.6px;line-height:11px;color:#fff;text-align:center;font-weight:bold;letter-spacing:-0.1px;">4mg Pack</div>
<div class="t" style="left:933.50px;top:433px;width:58.40px;font-size:9.6px;line-height:11px;color:#fff;text-align:center;font-weight:bold;letter-spacing:-0.1px;">Total</div>
<div class="t" style="left:649.70px;top:461px;width:148.90px;font-size:9.7px;line-height:11px;color:#111;text-align:center;transform:scaleX(0.975);transform-origin:center center;">Diabetes</div>
<div class="t" style="left:778.60px;top:461px;width:93.70px;font-size:9.7px;line-height:11px;color:#111;text-align:center;transform:scaleX(0.94);transform-origin:center center;">2,019</div>
<div class="t" style="left:852.30px;top:461px;width:101.20px;font-size:9.7px;line-height:11px;color:#111;text-align:center;transform:scaleX(0.94);transform-origin:center center;">1,282</div>
<div class="t" style="left:933.50px;top:461px;width:58.40px;font-size:9.7px;line-height:11px;color:#111;text-align:center;transform:scaleX(0.94);transform-origin:center center;">3,301</div>
<div class="t" style="left:649.70px;top:482px;width:148.90px;font-size:9.7px;line-height:11px;color:#111;text-align:center;transform:scaleX(0.975);transform-origin:center center;">Diabetes + Obesity</div>
<div class="t" style="left:778.60px;top:482px;width:93.70px;font-size:9.7px;line-height:11px;color:#111;text-align:center;transform:scaleX(0.94);transform-origin:center center;">1,533</div>
<div class="t" style="left:852.30px;top:482px;width:101.20px;font-size:9.7px;line-height:11px;color:#111;text-align:center;transform:scaleX(0.94);transform-origin:center center;">1,555</div>
<div class="t" style="left:933.50px;top:482px;width:58.40px;font-size:9.7px;line-height:11px;color:#111;text-align:center;transform:scaleX(0.94);transform-origin:center center;">3,088</div>
<div class="t" style="left:649.70px;top:502px;width:148.90px;font-size:9.7px;line-height:11px;color:#111;text-align:center;transform:scaleX(0.975);transform-origin:center center;">Fatty Liver</div>
<div class="t" style="left:778.60px;top:502px;width:93.70px;font-size:9.7px;line-height:11px;color:#111;text-align:center;transform:scaleX(0.94);transform-origin:center center;">10</div>
<div class="t" style="left:852.30px;top:502px;width:101.20px;font-size:9.7px;line-height:11px;color:#111;text-align:center;transform:scaleX(0.94);transform-origin:center center;">6</div>
<div class="t" style="left:933.50px;top:502px;width:58.40px;font-size:9.7px;line-height:11px;color:#111;text-align:center;transform:scaleX(0.94);transform-origin:center center;">16</div>
<div class="t" style="left:649.70px;top:523px;width:148.90px;font-size:9.7px;line-height:11px;color:#111;text-align:center;transform:scaleX(0.975);transform-origin:center center;">Non Diabetes</div>
<div class="t" style="left:778.60px;top:523px;width:93.70px;font-size:9.7px;line-height:11px;color:#111;text-align:center;transform:scaleX(0.94);transform-origin:center center;">701</div>
<div class="t" style="left:852.30px;top:523px;width:101.20px;font-size:9.7px;line-height:11px;color:#111;text-align:center;transform:scaleX(0.94);transform-origin:center center;">477</div>
<div class="t" style="left:933.50px;top:523px;width:58.40px;font-size:9.7px;line-height:11px;color:#111;text-align:center;transform:scaleX(0.94);transform-origin:center center;">1,178</div>
<div class="t" style="left:649.70px;top:544px;width:148.90px;font-size:9.7px;line-height:11px;color:#111;text-align:center;transform:scaleX(0.975);transform-origin:center center;">Obesity</div>
<div class="t" style="left:778.60px;top:544px;width:93.70px;font-size:9.7px;line-height:11px;color:#111;text-align:center;transform:scaleX(0.94);transform-origin:center center;">3,607</div>
<div class="t" style="left:852.30px;top:544px;width:101.20px;font-size:9.7px;line-height:11px;color:#111;text-align:center;transform:scaleX(0.94);transform-origin:center center;">2,904</div>
<div class="t" style="left:933.50px;top:544px;width:58.40px;font-size:9.7px;line-height:11px;color:#111;text-align:center;transform:scaleX(0.94);transform-origin:center center;">6,511</div>
<div class="b" style="left:659.70px;top:559.20px;width:322.20px;height:21.40px;background:#7c9fc1;"></div>
<div class="b" style="left:659.70px;top:558.70px;width:322.20px;height:1.20px;background:#6f97bf;"></div>
<div class="b" style="left:788.10px;top:559.20px;width:1.00px;height:21.40px;background:rgba(255,255,255,0.3);"></div>
<div class="b" style="left:861.80px;top:559.20px;width:1.00px;height:21.40px;background:rgba(255,255,255,0.1);"></div>
<div class="b" style="left:943.00px;top:559.20px;width:1.00px;height:21.40px;background:rgba(255,255,255,0.3);"></div>
<div class="t" style="left:649.70px;top:565px;width:148.90px;font-size:9.4px;line-height:11px;color:#fff;text-align:center;font-weight:bold;letter-spacing:-0.1px;">Total</div>
<div class="t" style="left:778.60px;top:565px;width:93.70px;font-size:9.4px;line-height:11px;color:#fff;text-align:center;font-weight:bold;letter-spacing:-0.1px;">7,870</div>
<div class="t" style="left:852.30px;top:565px;width:101.20px;font-size:9.4px;line-height:11px;color:#fff;text-align:center;font-weight:bold;letter-spacing:-0.1px;">6,224</div>
<div class="t" style="left:933.50px;top:565px;width:58.40px;font-size:9.4px;line-height:11px;color:#fff;text-align:center;font-weight:bold;letter-spacing:-0.1px;">14,094</div>
<div class="card" style="left:448.80px;top:601.50px;width:552.00px;height:262.00px;border-radius:6px;"></div>
<div class="t" style="left:454.70px;top:605px;width:400.00px;font-size:11.1px;line-height:12px;color:#2b2b2b;text-align:left;">Sales By Doctor Level</div>
<div class="b" style="left:454.70px;top:620.80px;width:525.10px;height:29.40px;background:#d98f4e;"></div>
<div class="b" style="left:454.70px;top:649.40px;width:525.10px;height:1.00px;background:#8a7f78;"></div>
<div class="b" style="left:534.10px;top:620.80px;width:1.00px;height:29.40px;background:rgba(255,255,255,0.3);"></div>
<div class="b" style="left:794.80px;top:620.80px;width:1.00px;height:29.40px;background:rgba(255,255,255,0.3);"></div>
<div class="b" style="left:850.20px;top:620.80px;width:1.00px;height:29.40px;background:rgba(255,255,255,0.1);"></div>
<div class="b" style="left:910.90px;top:620.80px;width:1.00px;height:29.40px;background:rgba(255,255,255,0.3);"></div>
<div class="t" style="left:444.70px;top:627px;width:99.90px;font-size:10.8px;line-height:12px;color:#fff;text-align:center;font-weight:bold;letter-spacing:-0.1px;">Doctor ID</div>
<div class="t" style="left:537.80px;top:627px;width:400.00px;font-size:10.8px;line-height:12px;color:#fff;text-align:left;font-weight:bold;letter-spacing:-0.1px;">Doctor Name</div>
<div class="t" style="left:785.30px;top:627px;width:75.40px;font-size:10.8px;line-height:12px;color:#fff;text-align:center;font-weight:bold;letter-spacing:-0.1px;">2mg</div>
<div class="t" style="left:840.70px;top:627px;width:80.70px;font-size:10.8px;line-height:12px;color:#fff;text-align:center;font-weight:bold;letter-spacing:-0.1px;">4mg</div>
<div class="t" style="left:901.40px;top:627px;width:88.40px;font-size:10.8px;line-height:12px;color:#fff;text-align:center;font-weight:bold;letter-spacing:-0.1px;">Total</div>
<div class="t" style="left:537.80px;top:656px;width:400.00px;font-size:9.7px;line-height:11px;color:#111;text-align:left;transform:scaleX(0.975);transform-origin:left center;">Doctor Not in the list</div>
<div class="t" style="left:785.30px;top:656px;width:75.40px;font-size:9.7px;line-height:11px;color:#111;text-align:center;transform:scaleX(0.94);transform-origin:center center;">457</div>
<div class="t" style="left:840.70px;top:656px;width:80.70px;font-size:9.7px;line-height:11px;color:#111;text-align:center;transform:scaleX(0.94);transform-origin:center center;">289</div>
<div class="t" style="left:901.40px;top:656px;width:88.40px;font-size:9.7px;line-height:11px;color:#111;text-align:center;transform:scaleX(0.94);transform-origin:center center;">746</div>
<div class="t" style="left:444.70px;top:677px;width:99.90px;font-size:9.7px;line-height:11px;color:#111;text-align:center;transform:scaleX(0.94);transform-origin:center center;">165812</div>
<div class="t" style="left:537.80px;top:677px;width:400.00px;font-size:9.7px;line-height:11px;color:#111;text-align:left;transform:scaleX(0.95);transform-origin:left center;">DR IMRAN UL HAQ</div>
<div class="t" style="left:785.30px;top:677px;width:75.40px;font-size:9.7px;line-height:11px;color:#111;text-align:center;transform:scaleX(0.94);transform-origin:center center;">126</div>
<div class="t" style="left:840.70px;top:677px;width:80.70px;font-size:9.7px;line-height:11px;color:#111;text-align:center;transform:scaleX(0.94);transform-origin:center center;">387</div>
<div class="t" style="left:901.40px;top:677px;width:88.40px;font-size:9.7px;line-height:11px;color:#111;text-align:center;transform:scaleX(0.94);transform-origin:center center;">513</div>
<div class="t" style="left:444.70px;top:698px;width:99.90px;font-size:9.7px;line-height:11px;color:#111;text-align:center;transform:scaleX(0.94);transform-origin:center center;">101547</div>
<div class="t" style="left:537.80px;top:698px;width:400.00px;font-size:9.7px;line-height:11px;color:#111;text-align:left;transform:scaleX(0.95);transform-origin:left center;">SULAIMAN ELAHI</div>
<div class="t" style="left:785.30px;top:698px;width:75.40px;font-size:9.7px;line-height:11px;color:#111;text-align:center;transform:scaleX(0.94);transform-origin:center center;">285</div>
<div class="t" style="left:840.70px;top:698px;width:80.70px;font-size:9.7px;line-height:11px;color:#111;text-align:center;transform:scaleX(0.94);transform-origin:center center;">110</div>
<div class="t" style="left:901.40px;top:698px;width:88.40px;font-size:9.7px;line-height:11px;color:#111;text-align:center;transform:scaleX(0.94);transform-origin:center center;">395</div>
<div class="t" style="left:444.70px;top:718px;width:99.90px;font-size:9.7px;line-height:11px;color:#111;text-align:center;transform:scaleX(0.94);transform-origin:center center;">170297</div>
<div class="t" style="left:537.80px;top:718px;width:400.00px;font-size:9.7px;line-height:11px;color:#111;text-align:left;transform:scaleX(0.95);transform-origin:left center;">DR NADEEM NAEEM</div>
<div class="t" style="left:785.30px;top:718px;width:75.40px;font-size:9.7px;line-height:11px;color:#111;text-align:center;transform:scaleX(0.94);transform-origin:center center;">169</div>
<div class="t" style="left:840.70px;top:718px;width:80.70px;font-size:9.7px;line-height:11px;color:#111;text-align:center;transform:scaleX(0.94);transform-origin:center center;">145</div>
<div class="t" style="left:901.40px;top:718px;width:88.40px;font-size:9.7px;line-height:11px;color:#111;text-align:center;transform:scaleX(0.94);transform-origin:center center;">314</div>
<div class="t" style="left:444.70px;top:739px;width:99.90px;font-size:9.7px;line-height:11px;color:#111;text-align:center;transform:scaleX(0.94);transform-origin:center center;">48001</div>
<div class="t" style="left:537.80px;top:739px;width:400.00px;font-size:9.7px;line-height:11px;color:#111;text-align:left;transform:scaleX(0.95);transform-origin:left center;">FAHEEM ULLAH</div>
<div class="t" style="left:785.30px;top:739px;width:75.40px;font-size:9.7px;line-height:11px;color:#111;text-align:center;transform:scaleX(0.94);transform-origin:center center;">201</div>
<div class="t" style="left:840.70px;top:739px;width:80.70px;font-size:9.7px;line-height:11px;color:#111;text-align:center;transform:scaleX(0.94);transform-origin:center center;">105</div>
<div class="t" style="left:901.40px;top:739px;width:88.40px;font-size:9.7px;line-height:11px;color:#111;text-align:center;transform:scaleX(0.94);transform-origin:center center;">306</div>
<div class="t" style="left:444.70px;top:760px;width:99.90px;font-size:9.7px;line-height:11px;color:#111;text-align:center;transform:scaleX(0.94);transform-origin:center center;">179088</div>
<div class="t" style="left:537.80px;top:760px;width:400.00px;font-size:9.7px;line-height:11px;color:#111;text-align:left;transform:scaleX(0.95);transform-origin:left center;">MUHAMMAD MURTAZA SHAFQAT</div>
<div class="t" style="left:785.30px;top:760px;width:75.40px;font-size:9.7px;line-height:11px;color:#111;text-align:center;transform:scaleX(0.94);transform-origin:center center;">129</div>
<div class="t" style="left:840.70px;top:760px;width:80.70px;font-size:9.7px;line-height:11px;color:#111;text-align:center;transform:scaleX(0.94);transform-origin:center center;">128</div>
<div class="t" style="left:901.40px;top:760px;width:88.40px;font-size:9.7px;line-height:11px;color:#111;text-align:center;transform:scaleX(0.94);transform-origin:center center;">258</div>
<div class="t" style="left:444.70px;top:781px;width:99.90px;font-size:9.7px;line-height:11px;color:#111;text-align:center;transform:scaleX(0.94);transform-origin:center center;">134510</div>
<div class="t" style="left:537.80px;top:781px;width:400.00px;font-size:9.7px;line-height:11px;color:#111;text-align:left;transform:scaleX(0.95);transform-origin:left center;">AMNA RIAZ</div>
<div class="t" style="left:785.30px;top:781px;width:75.40px;font-size:9.7px;line-height:11px;color:#111;text-align:center;transform:scaleX(0.94);transform-origin:center center;">125</div>
<div class="t" style="left:840.70px;top:781px;width:80.70px;font-size:9.7px;line-height:11px;color:#111;text-align:center;transform:scaleX(0.94);transform-origin:center center;">110</div>
<div class="t" style="left:901.40px;top:781px;width:88.40px;font-size:9.7px;line-height:11px;color:#111;text-align:center;transform:scaleX(0.94);transform-origin:center center;">235</div>
<div class="t" style="left:444.70px;top:802px;width:99.90px;font-size:9.7px;line-height:11px;color:#111;text-align:center;transform:scaleX(0.94);transform-origin:center center;">177200</div>
<div class="t" style="left:537.80px;top:802px;width:400.00px;font-size:9.7px;line-height:11px;color:#111;text-align:left;transform:scaleX(0.95);transform-origin:left center;">SHEHLA TABASSUM</div>
<div class="t" style="left:785.30px;top:802px;width:75.40px;font-size:9.7px;line-height:11px;color:#111;text-align:center;transform:scaleX(0.94);transform-origin:center center;">176</div>
<div class="t" style="left:840.70px;top:802px;width:80.70px;font-size:9.7px;line-height:11px;color:#111;text-align:center;transform:scaleX(0.94);transform-origin:center center;">51</div>
<div class="t" style="left:901.40px;top:802px;width:88.40px;font-size:9.7px;line-height:11px;color:#111;text-align:center;transform:scaleX(0.94);transform-origin:center center;">227</div>
<div class="t" style="left:444.70px;top:823px;width:99.90px;font-size:9.7px;line-height:11px;color:#111;text-align:center;transform:scaleX(0.94);transform-origin:center center;">5868</div>
<div class="t" style="left:537.80px;top:823px;width:400.00px;font-size:9.7px;line-height:11px;color:#111;text-align:left;transform:scaleX(0.95);transform-origin:left center;">IMTIAZ HASSAN</div>
<div class="t" style="left:785.30px;top:823px;width:75.40px;font-size:9.7px;line-height:11px;color:#111;text-align:center;transform:scaleX(0.94);transform-origin:center center;">162</div>
<div class="t" style="left:840.70px;top:823px;width:80.70px;font-size:9.7px;line-height:11px;color:#111;text-align:center;transform:scaleX(0.94);transform-origin:center center;">49</div>
<div class="t" style="left:901.40px;top:823px;width:88.40px;font-size:9.7px;line-height:11px;color:#111;text-align:center;transform:scaleX(0.94);transform-origin:center center;">211</div>
<div class="b" style="left:454.70px;top:835.20px;width:525.10px;height:22.50px;background:#d98f4e;"></div>
<div class="b" style="left:454.70px;top:834.70px;width:525.10px;height:1.20px;background:#7aa7cc;"></div>
<div class="b" style="left:534.10px;top:835.20px;width:1.00px;height:22.50px;background:rgba(255,255,255,0.3);"></div>
<div class="b" style="left:794.80px;top:835.20px;width:1.00px;height:22.50px;background:rgba(255,255,255,0.3);"></div>
<div class="b" style="left:850.20px;top:835.20px;width:1.00px;height:22.50px;background:rgba(255,255,255,0.1);"></div>
<div class="b" style="left:910.90px;top:835.20px;width:1.00px;height:22.50px;background:rgba(255,255,255,0.3);"></div>
<div class="t" style="left:444.70px;top:843px;width:99.90px;font-size:9.6px;line-height:11px;color:#fff;text-align:center;font-weight:bold;letter-spacing:-0.1px;transform:scaleX(1.065);transform-origin:center center;">Total</div>
<div class="t" style="left:785.30px;top:843px;width:75.40px;font-size:9.6px;line-height:11px;color:#fff;text-align:center;font-weight:bold;letter-spacing:-0.1px;transform:scaleX(1.065);transform-origin:center center;">10,048</div>
<div class="t" style="left:840.70px;top:843px;width:80.70px;font-size:9.6px;line-height:11px;color:#fff;text-align:center;font-weight:bold;letter-spacing:-0.1px;transform:scaleX(1.065);transform-origin:center center;">7,114</div>
<div class="t" style="left:901.40px;top:843px;width:88.40px;font-size:9.6px;line-height:11px;color:#fff;text-align:center;font-weight:bold;letter-spacing:-0.1px;transform:scaleX(1.065);transform-origin:center center;">17,179</div>
<svg style="left:915.2px;top:641.2px" width="7.4" height="4" viewBox="0 0 7.4 4"><path d="M0 0 H7.4 L3.7 3.6 Z" fill="#fff"/></svg>
<div class="b" style="left:990.60px;top:621.40px;width:4.00px;height:6.00px;background:#a8a8a8;border-radius:2px;"></div>
</div></body></html>
